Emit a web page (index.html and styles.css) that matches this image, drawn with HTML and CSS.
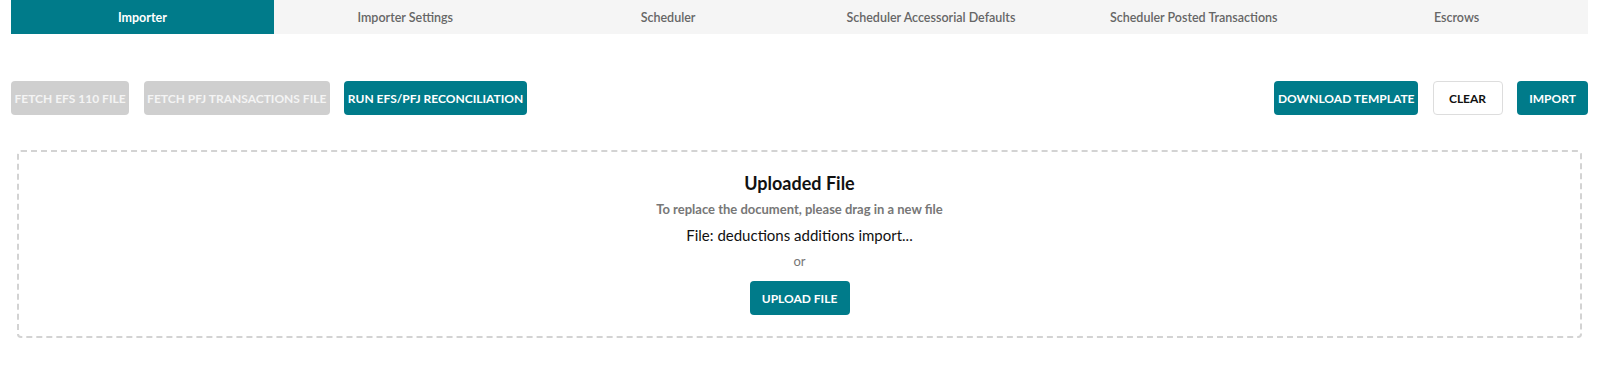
FILE: index.html
```html
<!DOCTYPE html>
<html>
<head>
<meta charset="utf-8">
<link rel="stylesheet" href="styles.css">
</head>
<body>
<div class="page">
  <nav class="tabs">
    <div class="tab active">Importer</div>
    <div class="tab">Importer Settings</div>
    <div class="tab">Scheduler</div>
    <div class="tab">Scheduler Accessorial Defaults</div>
    <div class="tab">Scheduler Posted Transactions</div>
    <div class="tab">Escrows</div>
  </nav>
  <div class="toolbar">
    <div class="group">
      <button class="btn disabled">FETCH EFS 110 FILE</button>
      <button class="btn disabled">FETCH PFJ TRANSACTIONS FILE</button>
      <button class="btn primary">RUN EFS/PFJ RECONCILIATION</button>
    </div>
    <div class="group">
      <button class="btn primary">DOWNLOAD TEMPLATE</button>
      <button class="btn outline">CLEAR</button>
      <button class="btn primary narrow">IMPORT</button>
    </div>
  </div>
  <div class="dropzone">
    <div class="dz-title">Uploaded File</div>
    <div class="dz-sub">To replace the document, please drag in a new file</div>
    <div class="dz-file">File: deductions additions import...</div>
    <div class="dz-or">or</div>
    <button class="btn primary upload">UPLOAD FILE</button>
  </div>
</div>
</body>
</html>
```
FILE: styles.css
```css
html, body {
  margin: 0;
  padding: 0;
  background: #fff;
  font-family: Lato, "Open Sans", sans-serif;
}
.page {
  margin: 0 12px 0 11px;
}
.tabs {
  display: grid;
  grid-template-columns: repeat(6, 1fr);
  background: #f5f5f5;
  height: 34px;
}
.tab {
  display: flex;
  align-items: center;
  justify-content: center;
  font-size: 12.5px;
  color: #666;
  font-weight: 600;
}
.tab.active {
  background: #007b8a;
  color: #fff;
  font-weight: 700;
}
.toolbar {
  display: flex;
  justify-content: space-between;
  margin-top: 47px;
}
.group {
  display: flex;
  gap: 14.5px;
}
.btn {
  font-family: Lato, "Open Sans", sans-serif;
  font-size: 12px;
  font-weight: 700;
  height: 34px;
  padding: 0 2.5px;
  border-radius: 4px;
  border: 1px solid transparent;
  color: #fff;
  white-space: nowrap;
  cursor: pointer;
}
.btn.disabled {
  background: #cfcfcf;
  color: #f4f4f4;
}
.btn.primary {
  background: #007b8a;
}
.btn.outline {
  background: #fff;
  border-color: #ddd;
  color: #111;
  width: 70px;
}
.btn.narrow { width: 71px; }
.dropzone {
  margin: 35px 6px 0;
  height: 188px;
  box-sizing: border-box;
  border: 2px dashed #d3d3d3;
  border-radius: 4px;
  display: flex;
  flex-direction: column;
  align-items: center;
  padding-top: 19px;
}
.dz-title {
  font-size: 18px;
  font-weight: 700;
  color: #111;
  line-height: 24px;
}
.dz-sub {
  font-size: 13px;
  font-weight: 700;
  color: #777;
  margin-top: 5px;
  line-height: 18px;
}
.dz-file {
  font-size: 15px;
  color: #111;
  margin-top: 6px;
  line-height: 22px;
}
.dz-or {
  font-size: 13px;
  color: #777;
  margin-top: 6px;
  line-height: 18px;
}
.btn.upload {
  margin-top: 11px;
  width: 100px;
}
```
